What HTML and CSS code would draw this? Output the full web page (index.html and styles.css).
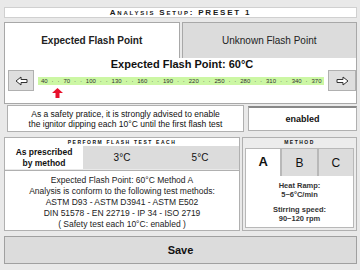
FILE: index.html
```html
<!DOCTYPE html>
<html lang="en">
<head>
<meta charset="utf-8"/>
<meta content="width=device-width, initial-scale=1.0" name="viewport"/>
<title>Analysis Setup</title>
<link rel="stylesheet" href="styles.css">
</head>
<body>
<div class="screen">
  <div class="title">Analysis Setup: PRESET 1</div>

  <div class="tabs">
    <div class="tab active">Expected Flash Point</div>
    <div class="tab">Unknown Flash Point</div>
  </div>

  <div class="panel">
    <div class="panel-heading">Expected Flash Point: 60°C</div>
    <div class="ruler-row">
      <button class="arrow-btn">
        <svg width="13" height="10" viewBox="0 0 13 10"><path d="M1 5 L6 1 L6 3.5 L12 3.5 L12 6.5 L6 6.5 L6 9 Z" fill="#fff" stroke="#333" stroke-width="1"/></svg>
      </button>
      <div class="ruler">
        <span>40</span><i>·</i><i>·</i><span>70</span><i>·</i><i>·</i><span>100</span><i>·</i><i>·</i><span>130</span><i>·</i><i>·</i><span>160</span><i>·</i><i>·</i><span>190</span><i>·</i><i>·</i><span>220</span><i>·</i><i>·</i><span>250</span><i>·</i><i>·</i><span>280</span><i>·</i><i>·</i><span>310</span><i>·</i><i>·</i><span>340</span><i>·</i><span>370</span>
        <svg class="marker" style="left: 14px" width="11" height="10" viewBox="0 0 11 10"><path d="M5.5 0 L11 5 L7.5 5 L7.5 10 L3.5 10 L3.5 5 L0 5 Z" fill="#e8102c"/></svg>
      </div>
      <button class="arrow-btn">
        <svg width="13" height="10" viewBox="0 0 13 10"><path d="M12 5 L7 1 L7 3.5 L1 3.5 L1 6.5 L7 6.5 L7 9 Z" fill="#fff" stroke="#333" stroke-width="1"/></svg>
      </button>
    </div>
  </div>

  <div class="safety-row">
    <div class="safety-text">As a safety pratice, it is strongly advised to enable<br>the ignitor dipping each 10°C until the first flash test</div>
    <div class="safety-state">enabled</div>
  </div>

  <div class="sections">
    <div class="section perform">
      <div class="section-title">Perform flash test each</div>
      <div class="choice-row">
        <div class="choice active">As prescribed<br>by method</div>
        <div class="choice">3°C</div>
        <div class="choice">5°C</div>
      </div>
      <div class="info">
        Expected Flash Point: 60°C Method A<br>
        Analysis is conform to the following test methods:<br>
        ASTM D93 - ASTM D3941 - ASTM E502<br>
        DIN 51578 - EN 22719 - IP 34 - ISO 2719<br>
        ( Safety test each 10°C: enabled )
      </div>
    </div>
    <div class="section method">
      <div class="section-title">Method</div>
      <div class="method-tabs">
        <div class="mtab active">A</div>
        <div class="mtab">B</div>
        <div class="mtab">C</div>
      </div>
      <div class="method-info">
        <p>Heat Ramp:<br>5~6°C/min</p>
        <p>Stirring speed:<br>90~120 rpm</p>
      </div>
    </div>
  </div>

  <button class="save">Save</button>
</div>
</body>
</html>
```

FILE: styles.css
```css
body {
  margin: 0;
  background: #e9e9e9;
  font-family: "Liberation Sans", Arial, sans-serif;
  color: #111;
}
.screen {
  width: 360px;
  height: 270px;
  box-sizing: border-box;
  padding: 7px 3px 0 4px;
  display: flex;
  flex-direction: column;
}
.title {
  height: 11px;
  box-sizing: border-box;
  background: white;
  border: 1px solid #d0d0d0;
  font-size: 8px;
  font-weight: bold;
  line-height: 9px;
  font-variant: small-caps;
  letter-spacing: 1.8px;
  text-align: center;
  color: #1a1a1a;
}
.tabs {
  display: flex;
  gap: 2px;
  margin-top: 4px;
  height: 36px;
}
.tab {
  flex: 1;
  display: flex;
  align-items: center;
  justify-content: center;
  background: #dcdcdc;
  border: 1px solid #a8a8a8;
  border-bottom: none;
  font-size: 10px;
  color: #222;
}
.tab.active {
  background: white;
  font-weight: bold;
}
.panel {
  height: 46px;
  box-sizing: border-box;
  background: white;
  border: 1px solid #a8a8a8;
  border-top: none;
  padding: 1px 0 0 3px;
}
.panel-heading {
  font-size: 11px;
  font-weight: bold;
  line-height: 11px;
  text-align: center;
}
.ruler-row {
  display: flex;
  align-items: center;
  gap: 4px;
  height: 21px;
}
.arrow-btn {
  width: 26px;
  height: 21px;
  padding: 0;
  background: #dedede;
  border: 1px solid #b0b0b0;
  display: flex;
  align-items: center;
  justify-content: center;
}
.arrow-btn:last-child {
  width: 28px;
}
.ruler {
  position: relative;
  flex: 1;
  height: 8px;
  background: #ccf7a4;
  display: flex;
  justify-content: space-between;
  align-items: center;
  padding: 0 2px 0 3px;
  font-size: 6px;
  color: #333;
}
.ruler i {
  font-style: normal;
}
.marker {
  position: absolute;
  top: 11px;
}
.safety-row {
  display: flex;
  gap: 4px;
  margin-top: 1px;
  height: 27px;
  padding-left: 3px;
}
.safety-text {
  flex: 1;
  background: white;
  border: 1px solid #b0b0b0;
  font-size: 8.5px;
  line-height: 10px;
  text-align: center;
  display: flex;
  align-items: center;
  justify-content: center;
}
.safety-state {
  width: 109px;
  box-sizing: border-box;
  margin: 1px 0;
  background: white;
  border: 1px solid #b0b0b0;
  border-top: 2px solid #888;
  font-size: 9px;
  font-weight: bold;
  display: flex;
  align-items: center;
  justify-content: center;
}
.sections {
  display: flex;
  gap: 2px;
  margin-top: 5px;
  height: 94px;
}
.section {
  border: 1px solid #b0b0b0;
  display: flex;
  flex-direction: column;
}
.perform {
  width: 236px;
  box-sizing: border-box;
}
.method {
  flex: 1;
  padding: 0 2px 2px;
  background: #ececec;
}
.section-title {
  height: 8px;
  font-size: 6.5px;
  font-weight: bold;
  line-height: 8px;
  font-variant: small-caps;
  text-transform: lowercase;
  letter-spacing: 1.5px;
  text-align: center;
  background: white;
  color: #111;
}
.method .section-title {
  background: transparent;
  margin-bottom: 2px;
}
.choice-row {
  display: flex;
  height: 28px;
}
.choice {
  flex: 1;
  background: #dcdcdc;
  display: flex;
  align-items: center;
  justify-content: center;
  text-align: center;
  font-size: 10px;
}
.choice.active {
  background: white;
  font-weight: bold;
  font-size: 8.5px;
  line-height: 11px;
}
.info {
  flex: 1;
  margin-top: 1px;
  background: white;
  border-top: 1px solid #b0b0b0;
  font-size: 8.5px;
  line-height: 11px;
  text-align: center;
  padding-top: 4px;
  color: #222;
}
.method-tabs {
  display: flex;
  height: 28px;
}
.mtab {
  flex: 1;
  background: #dcdcdc;
  border: 1px solid #b8b8b8;
  border-bottom: none;
  display: flex;
  align-items: center;
  justify-content: center;
  font-size: 12px;
}
.mtab.active {
  background: white;
  font-size: 13px;
  font-weight: bold;
  align-items: flex-start;
  padding-top: 5px;
}
.method-info {
  flex: 1;
  background: white;
  border: 1px solid #b8b8b8;
  border-top: none;
  font-size: 7.5px;
  font-weight: bold;
  line-height: 9px;
  text-align: center;
  color: #333;
}
.method-info p {
  margin: 5px 0 0;
}
.method-info p + p {
  margin-top: 6px;
}
.save {
  margin-top: 5px;
  height: 28px;
  background: #dcdcdc;
  border: 1px solid #a0a0a0;
  font-family: inherit;
  font-size: 11px;
  font-weight: bold;
  color: #111;
}
```
